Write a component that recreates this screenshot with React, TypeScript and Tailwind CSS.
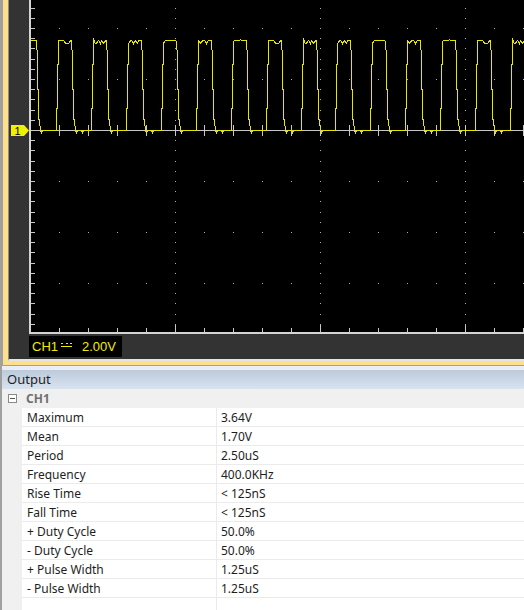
import React from 'react'

// scope geometry (page px): plot black starts at x=31, origin of grid at x=30
const PLOT_W = 493
const PLOT_H = 332
const CENTER_Y = 130
const DIV_X = 29
const DIV_Y = 10.2
const PERIOD = 34.93
const FIRST_RISE = 56 - 31

const tops = [
  [40, 40, 40, 40, 40, 40, 41, 43, 43, 43, 43, 42, 40, 40],
  [38, 42, 43, 43, 41, 40, 41, 43, 40, 41, 43, 42, 40, 40],
  [43, 42, 40, 40, 41, 43, 41, 40, 42, 43, 40, 40, 40, 40],
  [43, 41, 40, 40, 40, 40, 40, 40, 40, 40, 40, 40, 40, 41],
  [40, 41, 43, 42, 40, 40, 40, 41, 43, 41, 40, 40, 40, 40],
  [41, 40, 40, 40, 40, 40, 40, 39, 40, 40, 40, 40, 40, 40],
]

function wavePoints() {
  const pts: string[] = ['-20,130']
  for (let k = -1; k <= 13; k++) {
    const r = Math.round(FIRST_RISE + PERIOD * k)
    pts.push(`${r},130`, `${r},108`, `${r + 1},108`, `${r + 1},64`, `${r + 2},64`)
    const top = tops[(k + 6) % tops.length]
    top.forEach((y, i) => pts.push(`${r + 2 + i},${y}`))
    const f = r + 2 + top.length - 1
    pts.push(`${f + 1},58`, `${f + 1},88`, `${f + 2},90`, `${f + 2},118`, `${f + 3},120`, `${f + 4},130`)
    pts.push(`${f + 5},132`, `${f + 6},130`)
    if (k % 2 === 0) pts.push(`${f + 10},130`, `${f + 11},132`, `${f + 12},130`)
  }
  return pts.join(' ')
}

function ScopePlot() {
  const dots: React.ReactNode[] = []
  // horizontal dotted rows
  for (let j = -2; j <= 3; j++) {
    if (j === 0) continue
    const y = CENTER_Y + 51 * j
    for (let i = 1; i <= 17; i++) {
      dots.push(<rect key={`r${j}-${i}`} x={DIV_X * i - 1} y={y} width={1} height={1} fill="#b0b0b0" />)
    }
  }
  // vertical dotted columns
  for (let m = 1; m <= 3; m++) {
    const x = 145 * m - 1
    for (let n = -12; n <= 20; n++) {
      const y = Math.round(CENTER_Y + DIV_Y * n)
      if (y < 0 || y > 326 || n === 0) continue
      dots.push(<rect key={`c${m}-${n}`} x={x} y={y} width={1} height={1} fill="#b0b0b0" />)
    }
  }
  const ticks: React.ReactNode[] = []
  for (let n = -12; n <= 20; n++) {
    const y = Math.round(CENTER_Y + DIV_Y * n)
    if (y < 0 || y > 330) continue
    ticks.push(<rect key={`l${n}`} x={0} y={y} width={4} height={1} fill="#c8c8c8" />)
  }
  for (let i = 1; i <= 17; i++) {
    const x = DIV_X * i - 1
    const major = i % 5 === 0
    ticks.push(<rect key={`t${i}`} x={x} y={125} width={1} height={11} fill="#c8c8c8" />)
    ticks.push(<rect key={`b${i}`} x={x} y={major ? 325 : 328} width={1} height={major ? 7 : 4} fill="#c8c8c8" />)
  }
  return (
    <svg width={PLOT_W} height={PLOT_H} shapeRendering="crispEdges" className="block">
      {dots}
      <rect x={0} y={CENTER_Y} width={PLOT_W} height={1} fill="#c8c8c8" />
      {ticks}
      <polyline
        points={wavePoints()}
        transform="translate(0.5 0.5)"
        fill="none"
        stroke="#e6e600"
        strokeWidth={1}
      />
    </svg>
  )
}

function ChannelMarker() {
  return (
    <svg width={20} height={PLOT_H} className="block">
      <polygon points="2,125 15,125 20,130.5 15,136 2,136" fill="#f0f000" />
      <text x={8.5} y={134.5} textAnchor="middle" fontSize={11} fill="#000" fontFamily="'Liberation Sans', Arial, sans-serif">
        1
      </text>
    </svg>
  )
}

function DcIcon() {
  return (
    <svg width={11} height={5} className="block" shapeRendering="crispEdges">
      <rect x={0} y={0} width={2} height={1} fill="#eeee00" />
      <rect x={4.5} y={0} width={2} height={1} fill="#eeee00" />
      <rect x={9} y={0} width={2} height={1} fill="#eeee00" />
      <rect x={0} y={3} width={11} height={1} fill="#eeee00" />
    </svg>
  )
}

const measurements = [
  ['Maximum', '3.64V'],
  ['Mean', '1.70V'],
  ['Period', '2.50uS'],
  ['Frequency', '400.0KHz'],
  ['Rise Time', '< 125nS'],
  ['Fall Time', '< 125nS'],
  ['+ Duty Cycle', '50.0%'],
  ['- Duty Cycle', '50.0%'],
  ['+ Pulse Width', '1.25uS'],
  ['- Pulse Width', '1.25uS'],
]

export default function App() {
  return (
    <div className="w-[524px] h-[610px] overflow-hidden bg-white flex flex-col font-['Noto_Sans',sans-serif]">
      {/* Scope window */}
      <div className="flex h-[366px] shrink-0 bg-[#ffe08a] border-l-[3px] border-b border-[#a0a0a0] pl-[5px] pb-[4px]">
        <div className="flex-1 flex flex-col min-w-0 bg-[#333333] border-l border-b-2 border-l-[#8c8c8c] border-b-[#e4e4e4]">
          <div className="flex h-[334px] shrink-0">
            <div className="w-[20px] shrink-0">
              <ChannelMarker />
            </div>
            <div className="flex-1 min-w-0 overflow-hidden bg-black border-l-2 border-b-2 border-[#d4d4d4]">
              <ScopePlot />
            </div>
          </div>
          <div className="flex-1 flex items-center">
            <div className="ml-[20px] w-[93px] h-[21px] bg-black flex items-center pl-[3px] text-[13px] text-[#eeee00] font-['Liberation_Sans',Arial,sans-serif] leading-none">
              <span>CH1</span>
              <span className="ml-[3px] mt-[-2px]">
                <DcIcon />
              </span>
              <span className="ml-[10px]">2.00V</span>
            </div>
          </div>
        </div>
      </div>

      {/* Output window */}
      <div className="flex-1 flex flex-col border-l-2 border-[#a0a0a0] text-[12px] text-[#1e1e1e]">
        <div className="h-[4px] bg-[#e9edf7]" />
        <div className="h-[19px] flex items-center pl-[5px] pt-px text-[13px] bg-gradient-to-b from-[#bccadb] to-[#d8e3f0]">
          Output
        </div>
        <div className="h-[19px] flex items-center bg-[#f0f0f0]">
          <div className="ml-[6px] w-[9px] h-[9px] border border-[#8a8a8a] bg-white flex items-center justify-center">
            <div className="w-[5px] h-px bg-[#555]" />
          </div>
          <span className="ml-[9px] pt-px font-bold text-[#707070]">CH1</span>
        </div>
        {measurements.map(([name, value]) => (
          <div key={name} className="h-[19px] flex">
            <div className="w-[20px] bg-[#f0f0f0]" />
            <div className="w-[195px] flex items-center pl-[5px] pt-px border-b border-r border-[#ebebeb]">{name}</div>
            <div className="flex-1 flex items-center pl-[4px] pt-px border-b border-[#ebebeb]">{value}</div>
          </div>
        ))}
        <div className="flex-1 flex">
          <div className="w-[20px] bg-[#f0f0f0]" />
          <div className="w-[195px] border-r border-[#ebebeb]" />
        </div>
      </div>
    </div>
  )
}
